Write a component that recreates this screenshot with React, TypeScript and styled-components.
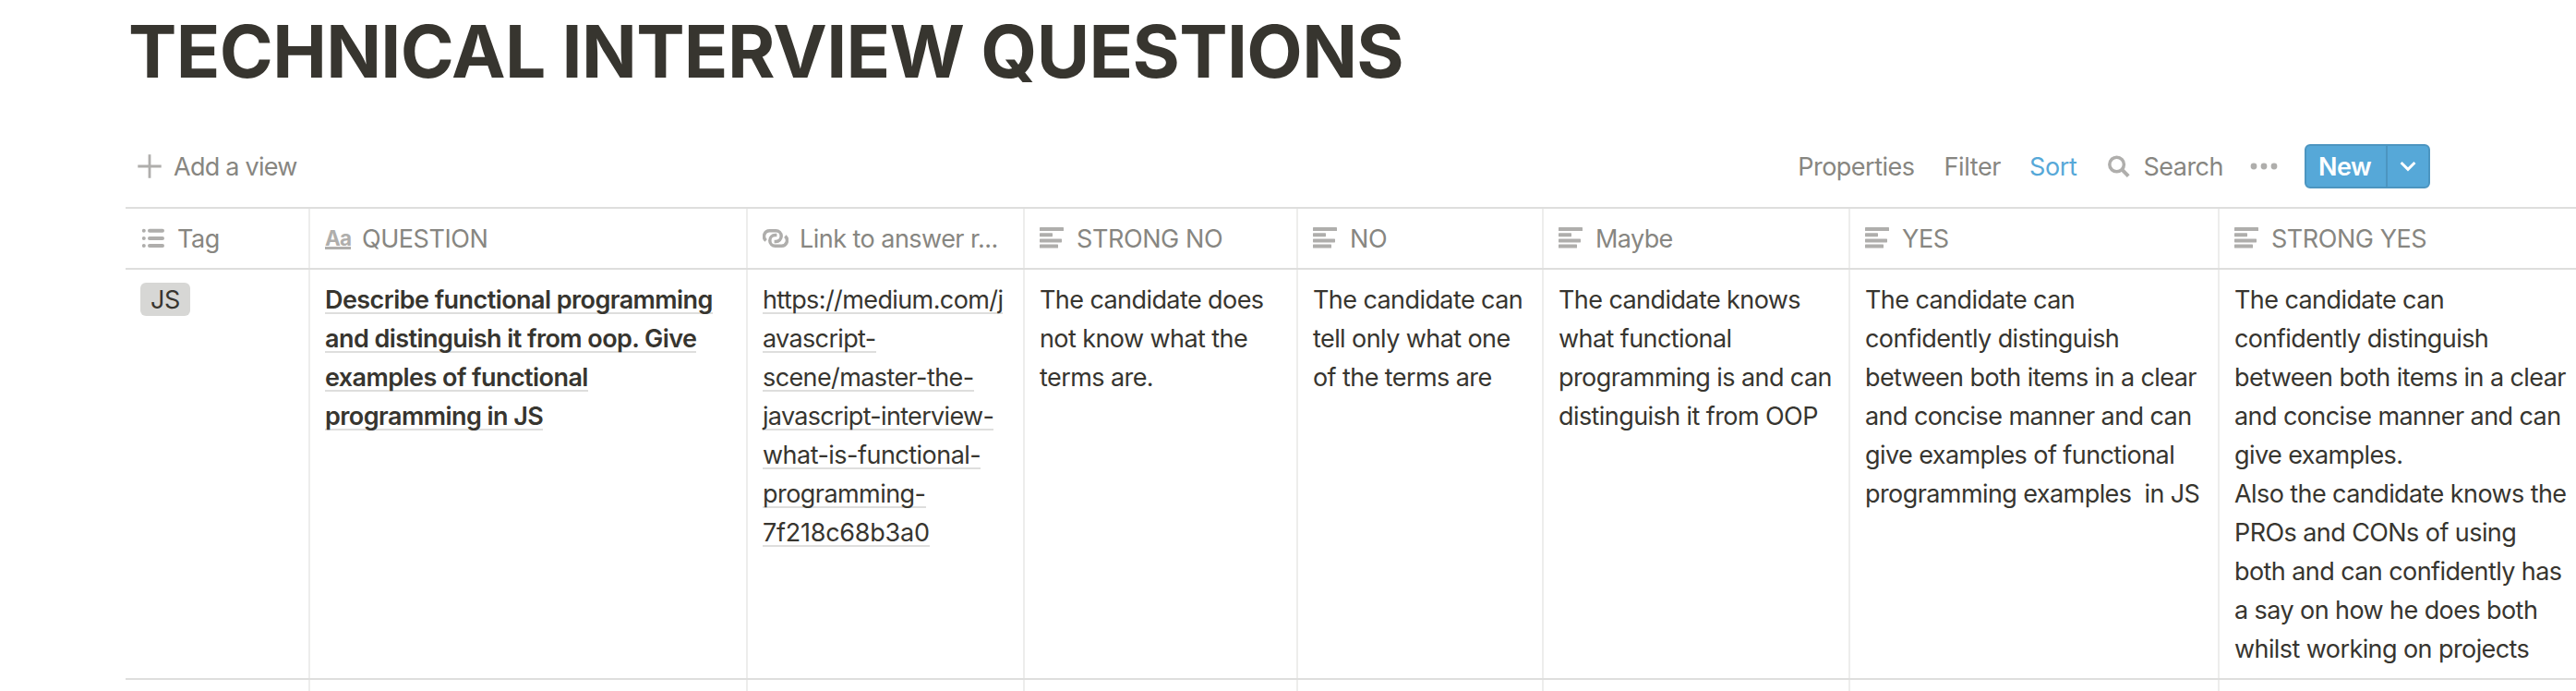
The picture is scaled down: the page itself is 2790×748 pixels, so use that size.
import React from "react";
import styled, { createGlobalStyle } from "styled-components";

const ink = "#37352f";
const muted = "#878681";
const faint = "#afaeac";
const blue = "#56a8d8";
const blueEdge = "#4c95c0";
const rule = "#dededd";
const columnRule = "#ededec";

const GlobalStyle = createGlobalStyle`
  *, *::before, *::after { box-sizing: border-box; }
  body {
    margin: 0;
    background: #fff;
    color: ${ink};
    font-family: Inter, "Liberation Sans", sans-serif;
  }
`;

const Page = styled.main`
  height: 748px;
  padding: 7px 0 0 136px;
  overflow: hidden;
  font-size: 27px;
  line-height: 42px;
`;

const Title = styled.h1`
  margin: 0;
  padding: 1px 0 0 3px;
  font-size: 78.5px;
  font-weight: 700;
  line-height: 95px;
  letter-spacing: -0.66px;
  white-space: nowrap;
`;

const Toolbar = styled.div`
  display: flex;
  align-items: center;
  justify-content: space-between;
  width: 2496px;
  height: 88px;
  margin-top: 33px;
  padding-left: 13px;
  color: ${muted};
`;

const ToolGroup = styled.div`
  display: flex;
  align-items: center;
`;

const Tool = styled.button<{ $gap?: number; $active?: boolean; $spacing?: number }>`
  display: flex;
  align-items: center;
  padding: 0;
  margin-right: ${(p) => p.$gap ?? 0}px;
  border: 0;
  background: none;
  color: ${(p) => (p.$active ? blue : "inherit")};
  font: inherit;
  letter-spacing: ${(p) => p.$spacing ?? -0.4}px;
  white-space: nowrap;
`;

const ToolLabel = styled.span`
  padding-top: 1px;
`;

const Glyph = styled.svg<{ $after?: number }>`
  display: block;
  flex: none;
  margin-right: ${(p) => p.$after ?? 12}px;
  color: ${faint};
`;

const SplitButton = styled.div`
  display: flex;
  width: 136px;
  height: 48px;
  border: 2px solid ${blueEdge};
  border-radius: 6px;
  background: ${blue};
  color: #fff;
`;

const NewButton = styled.button`
  width: 88px;
  padding: 1px 0 0 13px;
  border: 0;
  border-right: 2px solid ${blueEdge};
  background: none;
  color: inherit;
  font: inherit;
  font-weight: 600;
  letter-spacing: -0.5px;
  text-align: left;
`;

const MenuButton = styled.button`
  display: flex;
  flex: 1;
  align-items: center;
  justify-content: center;
  padding: 0;
  border: 0;
  background: none;
  color: inherit;
`;

const Table = styled.div`
  width: 2700px;
  border-top: 2px solid ${rule};
`;

const Row = styled.div<{ $height: number }>`
  display: grid;
  grid-template-columns: 200px 474px 300px 296px 266px 332px 400px 1fr;
  height: ${(p) => p.$height}px;
  border-bottom: 2px solid ${rule};
`;

const HeadCell = styled.div`
  display: flex;
  align-items: center;
  padding-left: 16px;
  border-right: 2px solid ${columnRule};
  color: ${muted};
`;

const HeadLabel = styled.span<{ $spacing?: number }>`
  padding-top: 1px;
  letter-spacing: ${(p) => p.$spacing ?? -0.4}px;
  white-space: nowrap;
`;

const Cell = styled.div`
  padding: 12px 0 0 16px;
  border-right: 2px solid ${columnRule};
`;

const TextLine = styled.div<{ $spacing?: number }>`
  letter-spacing: ${(p) => p.$spacing ?? -0.58}px;
  white-space: pre;
`;

const Underlined = styled.span<{ $bold?: boolean }>`
  font-weight: ${(p) => (p.$bold ? 600 : 400)};
  background: linear-gradient(${rule}, ${rule}) 0 calc(100% - 1px) / 100% 2px no-repeat;
`;

const Chip = styled.span`
  display: block;
  width: 54px;
  height: 36px;
  margin-top: 2px;
  border-radius: 6px;
  background: #d7d7d5;
  line-height: 37px;
  letter-spacing: -0.4px;
  text-align: center;
`;

const TitleMark = styled.span`
  display: block;
  flex: none;
  width: 28px;
  height: 23px;
  margin-right: 12px;
  border-bottom: 3px solid ${faint};
  color: ${faint};
  font-size: 22.5px;
  font-weight: 700;
  line-height: 21px;
  letter-spacing: -0.8px;
`;

const ListIcon = () => (
  <Glyph width="28" height="28" viewBox="0 0 28 28" fill="none" stroke="currentColor" strokeWidth="4" strokeLinecap="round">
    <path d="M3.8 5.8h.01M3.8 14h.01M3.8 22h.01M10 5.8h14M10 14h14M10 22h14" />
  </Glyph>
);

const TextIcon = () => (
  <Glyph width="28" height="28" viewBox="0 0 28 28" fill="currentColor">
    <rect y="2" width="26" height="4" rx=".6" />
    <rect y="8.2" width="14" height="4" rx=".6" />
    <rect y="14.4" width="24" height="4" rx=".6" />
    <rect y="20.5" width="20" height="4" rx=".6" />
  </Glyph>
);

const LinkIcon = () => (
  <Glyph width="28" height="28" viewBox="0 0 28 28" fill="none" stroke="currentColor" strokeWidth="3.5">
    <path d="M3.7 16.4A6 6 0 0 1 7.6 5.8H14.4A5.8 5.8 0 0 1 14.4 17.4H12.6" />
    <path d="M24.3 11.6A6 6 0 0 1 20.4 22.2H13.6A5.8 5.8 0 0 1 13.6 10.6H15.4" />
  </Glyph>
);

const PlusIcon = () => (
  <Glyph width="26" height="26" viewBox="0 0 26 26" $after={13} stroke="currentColor" strokeWidth="2.8">
    <path d="M13 .3v25.4M.3 13h25.4" />
  </Glyph>
);

const SearchIcon = () => (
  <Glyph width="24" height="24" viewBox="0 0 24 24" $after={14} fill="none" stroke="currentColor" strokeWidth="3.5">
    <circle cx="9.6" cy="10" r="7.8" />
    <path d="M14.8 15.2l7.4 7.4" strokeWidth="4" />
  </Glyph>
);

const DotsIcon = () => (
  <Glyph width="30" height="8" viewBox="0 0 30 8" $after={0} fill="currentColor">
    <circle cx="4" cy="4" r="3.4" />
    <circle cx="15" cy="4" r="3.4" />
    <circle cx="26" cy="4" r="3.4" />
  </Glyph>
);

const columns = [
  { label: "Tag", icon: <ListIcon /> },
  { label: "QUESTION", icon: <TitleMark>Aa</TitleMark>, spacing: -0.45 },
  { label: "Link to answer r...", icon: <LinkIcon />, spacing: -0.53 },
  { label: "STRONG NO", icon: <TextIcon /> },
  { label: "NO", icon: <TextIcon /> },
  { label: "Maybe", icon: <TextIcon />, spacing: -0.6 },
  { label: "YES", icon: <TextIcon /> },
  { label: "STRONG YES", icon: <TextIcon />, spacing: -0.45 },
];

const question = [
  "Describe functional programming",
  "and distinguish it from oop. Give",
  "examples of functional",
  "programming in JS",
];

const link = [
  { text: "https://medium.com/j", spacing: -0.6 },
  { text: "avascript-", spacing: -0.65 },
  { text: "scene/master-the-", spacing: -0.6 },
  { text: "javascript-interview-", spacing: -0.68 },
  { text: "what-is-functional-", spacing: -0.52 },
  { text: "programming-", spacing: -0.55 },
  { text: "7f218c68b3a0", spacing: -0.25 },
];

const answers = [
  ["The candidate does", "not know what the", "terms are."],
  ["The candidate can", "tell only what one", "of the terms are"],
  ["The candidate knows", "what functional", "programming is and can", "distinguish it from OOP"],
  [
    "The candidate can",
    "confidently distinguish",
    "between both items in a clear",
    "and concise manner and can",
    "give examples of functional",
    "programming examples  in JS",
  ],
  [
    "The candidate can",
    "confidently distinguish",
    "between both items in a clear",
    "and concise manner and can",
    "give examples.",
    "Also the candidate knows the",
    "PROs and CONs of using",
    "both and can confidently has",
    "a say on how he does both",
    "whilst working on projects",
  ],
];

export default function App() {
  return (
    <Page>
      <GlobalStyle />
      <Title>TECHNICAL INTERVIEW QUESTIONS</Title>
      <Toolbar>
        <ToolGroup>
          <Tool $spacing={-0.75}>
            <PlusIcon />
            <ToolLabel>Add a view</ToolLabel>
          </Tool>
        </ToolGroup>
        <ToolGroup>
          <Tool $gap={32} $spacing={-0.5}>
            <ToolLabel>Properties</ToolLabel>
          </Tool>
          <Tool $gap={31}>
            <ToolLabel>Filter</ToolLabel>
          </Tool>
          <Tool $gap={34} $active>
            <ToolLabel>Sort</ToolLabel>
          </Tool>
          <Tool $gap={29} $spacing={-0.5}>
            <SearchIcon />
            <ToolLabel>Search</ToolLabel>
          </Tool>
          <Tool $gap={29} aria-label="More">
            <DotsIcon />
          </Tool>
          <SplitButton>
            <NewButton>New</NewButton>
            <MenuButton aria-label="New options">
              <svg width="20" height="14" viewBox="0 0 20 14" fill="none" stroke="currentColor" strokeWidth="3">
                <path d="M2.6 3l7.4 7.4L17.4 3" />
              </svg>
            </MenuButton>
          </SplitButton>
        </ToolGroup>
      </Toolbar>
      <Table>
        <Row $height={66}>
          {columns.map(({ label, icon, spacing }) => (
            <HeadCell key={label}>
              {icon}
              <HeadLabel $spacing={spacing}>{label}</HeadLabel>
            </HeadCell>
          ))}
        </Row>
        <Row $height={444}>
          <Cell>
            <Chip>JS</Chip>
          </Cell>
          <Cell>
            {question.map((line) => (
              <TextLine key={line} $spacing={-0.56}>
                <Underlined $bold>{line}</Underlined>
              </TextLine>
            ))}
          </Cell>
          <Cell>
            {link.map(({ text, spacing }) => (
              <TextLine key={text} $spacing={spacing}>
                <Underlined>{text}</Underlined>
              </TextLine>
            ))}
          </Cell>
          {answers.map((lines, i) => (
            <Cell key={i}>
              {lines.map((line) => (
                <TextLine key={line}>{line}</TextLine>
              ))}
            </Cell>
          ))}
        </Row>
        <Row $height={60}>
          {columns.map(({ label }) => (
            <Cell key={label} />
          ))}
        </Row>
      </Table>
    </Page>
  );
}
